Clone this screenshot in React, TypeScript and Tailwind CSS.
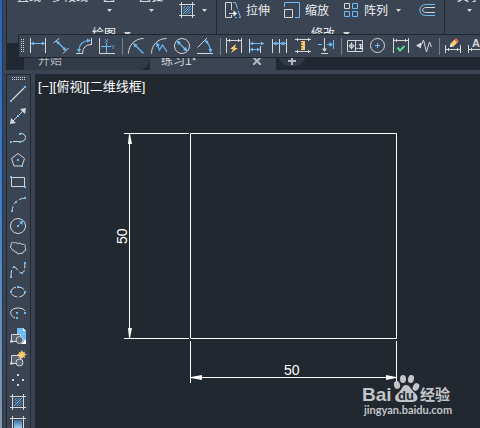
import type { ReactNode } from "react";

const G = "#d4d6d8";
const B = "#6cbcf8";
const Y = "#fbcb6b";

type Tool = { name: string; art: ReactNode };

function Icon({ children }: { children: ReactNode }) {
  return (
    <svg width="17" height="17" viewBox="0 0 17 17" fill="none" stroke={G} className="block shrink-0" aria-hidden="true">
      {children}
    </svg>
  );
}

function Dots({ points }: { points: number[][] }) {
  return (
    <>
      {points.map(([x, y]) => (
        <rect key={`${x}-${y}`} x={x - 1} y={y - 1} width="2" height="2" fill={B} stroke="none" />
      ))}
    </>
  );
}

function Caret({ className = "" }: { className?: string }) {
  return (
    <svg width="5" height="3" viewBox="0 0 5 3" className={`block shrink-0 ${className}`} aria-hidden="true">
      <path d="M0 0H5L2.5 3Z" fill="#d4d6d8" />
    </svg>
  );
}

const hatchArt = (
  <>
    <path d="M2.5 0V16M13.5 0V16M0 2.5H16M0 13.5H16" />
    <path stroke={B} d="M4 6.5L6.5 4M4 9.5L9.5 4M4 12L12 4M6.5 12L12 6.5M9.5 12L12 9.5" />
  </>
);

const dimensionGroups: Tool[][] = [
  [
    {
      name: "线性",
      art: (
        <>
          <path d="M.5 0V15M15.5 0V15" />
          <path stroke={B} d="M1 5.5H15" />
          <path fill={B} stroke="none" d="M1 5.5L4 3.5V7.5ZM15 5.5L12 3.5V7.5Z" />
        </>
      ),
    },
    {
      name: "对齐",
      art: (
        <>
          <path d="M.5 5L6.5 0M10 15.5L15.5 10" />
          <path stroke={B} strokeWidth="1.2" d="M3.5 3L13 12.5" />
          <path fill={B} stroke="none" d="M3 2.5L7 4L4.5 6.5ZM13.5 13L9.5 11.5L12 9Z" />
        </>
      ),
    },
    {
      name: "弧长",
      art: (
        <>
          <path d="M0 15.5H7M15.5 0V7M6.5 15Q7 7 15 6.5" />
          <path stroke={B} strokeWidth="1.2" d="M3 13Q3 3 13 2.5" />
          <path fill={B} stroke="none" d="M3 15L1 11H5ZM15 2.5L11 .5V4.5Z" />
        </>
      ),
    },
    {
      name: "坐标",
      art: (
        <>
          <path d="M.5 0V15.5H16" />
          <path stroke={B} d="M7.5 5V15M2 8.5H12" />
          <text x="5.5" y="4.5" fontSize="6" fill={B} stroke="none" fontFamily="Liberation Sans, sans-serif">X</text>
          <text x="12" y="11" fontSize="6" fill={B} stroke="none" fontFamily="Liberation Sans, sans-serif">Y</text>
        </>
      ),
    },
  ],
  [
    {
      name: "半径",
      art: (
        <>
          <path d="M.5 15.5C.5 7 7 .5 15.5 .5" />
          <path stroke={B} strokeWidth="1.2" d="M7 7L15.5 15.5" />
          <path fill={B} stroke="none" d="M5 5L9.5 6.5L6.5 9.5Z" />
        </>
      ),
    },
    {
      name: "折弯",
      art: (
        <>
          <path d="M.5 15.5C.5 7 7 .5 15.5 .5" />
          <path stroke={B} strokeWidth="1.2" d="M6 6L8.5 12L11.5 7L16 14" />
          <path fill={B} stroke="none" d="M5 4L9 7L5.5 9Z" />
        </>
      ),
    },
    {
      name: "直径",
      art: (
        <>
          <circle cx="8" cy="8" r="7.5" />
          <path stroke={B} strokeWidth="1.2" d="M3 3L13 13" />
          <path fill={B} stroke="none" d="M2.5 2.5L7 4L4 7ZM13.5 13.5L9 12L12 9Z" />
        </>
      ),
    },
    {
      name: "角度",
      art: (
        <>
          <path d="M0 15.5H16M.5 9.5L10 0" />
          <path stroke={B} strokeWidth="1.2" d="M8.5 3Q13.5 7 13.5 14" />
          <path fill={B} stroke="none" d="M7.5 2L11.5 3L9.5 6ZM13.5 15L11.5 11H15.5Z" />
        </>
      ),
    },
  ],
  [
    {
      name: "快速标注",
      art: (
        <>
          <path d="M.5 0V15M15.5 0V15M1 2.5H15M3.5 1V4M12.5 1V4" />
          <path fill={Y} stroke="none" d="M10 6L4 11H7L5 15L12 10H9Z" />
        </>
      ),
    },
    {
      name: "基线",
      art: (
        <>
          <path d="M.5 1V15M11.5 8V15" />
          <path stroke={B} d="M1 5.5H15M1 11.5H11" />
          <path fill={B} stroke="none" d="M1 5.5L4 3.5V7.5ZM1 11.5L4 9.5V13.5ZM15 5.5L12 3.5V7.5ZM11 11.5L8 9.5V13.5Z" />
        </>
      ),
    },
    {
      name: "连续",
      art: (
        <>
          <path d="M.5 1V15M7.5 1V15M14.5 1V15" />
          <path stroke={B} d="M1 5.5H14" />
          <path fill={B} stroke="none" d="M1 5.5L4 3.5V7.5ZM7 5.5L4.5 3.5V7.5ZM8 5.5L10.5 3.5V7.5ZM14 5.5L11 3.5V7.5Z" />
        </>
      ),
    },
    {
      name: "等距标注",
      art: (
        <>
          <path d="M0 1.5H16M0 13.5H16M2.5 0V3M13.5 0V3M2.5 12V15M13.5 12V15" />
          <path fill={Y} stroke="none" d="M6 3H10V12H6V10.5H7.5V9.5H6V8H7.5V7H6V5.5H7.5V4.5H6Z" />
        </>
      ),
    },
    {
      name: "折断标注",
      art: (
        <>
          <path d="M6.5 0V13M3 15.5H10" />
          <path fill={G} stroke="none" d="M6.5 14L4 10.5H9Z" />
          <path stroke={B} d="M0 6.5H4M9 6.5H14M15.5 2V11" />
          <path fill={B} stroke="none" d="M15 6.5L11.5 4V9Z" />
        </>
      ),
    },
  ],
  [
    {
      name: "公差",
      art: (
        <>
          <path d="M.5 2.5H15.5V13.5H.5ZM8.5 2.5V13.5" />
          <circle cx="4.5" cy="8" r="2" />
          <path d="M4.5 4.5V11.5M1.5 8H7.5" />
          <text x="9" y="11" fontSize="8" fontWeight="bold" fill="#fff" stroke="none" fontFamily="Liberation Sans, sans-serif">.1</text>
        </>
      ),
    },
    {
      name: "圆心标记",
      art: (
        <>
          <circle cx="7.5" cy="7.5" r="7" />
          <path stroke={B} d="M7.5 5V10M5 7.5H10" />
        </>
      ),
    },
    {
      name: "检验",
      art: (
        <>
          <path d="M.5 0V15M15.5 0V15M1 2.5H15M3.5 1V4M12.5 1V4" />
          <path stroke="#58d68d" strokeWidth="2" d="M4.5 9.5L7 12.5L11.5 8" />
        </>
      ),
    },
    {
      name: "折弯线性",
      art: (
        <>
          <path d="M3 7.5H5L7.5 2L10.5 14L13.5 4L15.5 9" />
          <path fill={G} stroke="none" d="M0 7.5L5 4.5V10.5Z" />
        </>
      ),
    },
  ],
  [
    {
      name: "编辑标注",
      art: (
        <>
          <path d="M.5 7V15M15.5 7V15M1 11.5H15M3.5 10V13M12.5 10V13" />
          <path stroke={Y} strokeWidth="4" d="M7 7L11 3" />
          <path stroke="#fa5f5f" strokeWidth="4" d="M11 3L12.5 1.5" />
          <path fill="#fff" stroke="none" d="M5 9L5.5 5.5L8.5 8.5Z" />
        </>
      ),
    },
    {
      name: "编辑标注文字",
      art: (
        <>
          <path d="M.5 7V15M15.5 7V15M1 11.5H15M3.5 10V13" />
          <text x="4" y="9" fontSize="11" fontWeight="bold" fill={G} stroke="none" fontFamily="Liberation Sans, sans-serif">A</text>
        </>
      ),
    },
  ],
];

const drawTools: Tool[] = [
  { name: "直线", art: <><path d="M2 14L14 2" strokeWidth="1.2" /><Dots points={[[1, 15], [15, 1]]} /></> },
  {
    name: "构造线",
    art: (
      <>
        <path d="M2 14L14 2" />
        <path fill={G} stroke="none" d="M0 16L1 10L6 15ZM16 0L10 1L15 6Z" />
        <Dots points={[[8, 8]]} />
      </>
    ),
  },
  { name: "多段线", art: <><path d="M3 11.5H9M11 3.5C17 3.5 17 11.5 11 11.5" /><Dots points={[[1, 12], [10, 12], [10, 4]]} /></> },
  { name: "多边形", art: <><path d="M8 1.5L14.5 6.5L12 14H4L1.5 6.5Z" /><Dots points={[[8, 8], [12, 14]]} /></> },
  { name: "矩形", art: <><path d="M1.5 3.5H14.5V12.5H1.5Z" /><Dots points={[[1, 3], [15, 13]]} /></> },
  { name: "圆弧", art: <><path d="M2 15C3 7 7 3 15 2" strokeDasharray="5 2" /><Dots points={[[2, 15], [6, 6], [15, 2]]} /></> },
  {
    name: "圆",
    art: (
      <>
        <circle cx="8" cy="8" r="7.5" />
        <path stroke={B} d="M9.5 6.5L12 4" />
        <path fill={B} stroke="none" d="M13 3L12.5 7L9 3.5Z" />
        <Dots points={[[8, 8]]} />
      </>
    ),
  },
  {
    name: "修订云线",
    art: <path d="M2 9C0 8 0 5 1.500 5C0 2.500 3 1.500 4.500 3C5.500 2 7.500 2.500 7.500 4C9 2.500 11.500 3 11.500 4.500C14 3.500 16.500 5.500 15 7.500C16.500 9 15.500 11.500 13.500 11.500C13.500 13.500 11 14 10 13C8.500 14.500 6.500 14 6.500 12C4.500 12.500 3.500 11 4 10C3 10.500 2 10 2 9Z" />,
  },
  { name: "样条曲线", art: <><path d="M1 15C1 10 2 5 4 5C7 5 9 12 12 11C15 10 14.5 6 15 1" strokeDasharray="7 2" /><Dots points={[[1, 15], [4, 5], [12, 11], [15, 1]]} /></> },
  { name: "椭圆", art: <><ellipse cx="8" cy="8" rx="7" ry="5" strokeDasharray="7 2" strokeDashoffset="-1" /><Dots points={[[1, 8], [8, 3], [15, 8]]} /></> },
  { name: "椭圆弧", art: <><path d="M15 5C13 1 3 1 1 5C0 8 2 11 5 12" /><Dots points={[[7, 7], [15, 7], [7, 12]]} /></> },
  {
    name: "插入块",
    art: (
      <>
        <path fill={B} stroke="none" d="M7 0H13L16 3V13H7Z" />
        <path fill="#fff" stroke="none" d="M13 0V3H16ZM11 16H16V11Z" />
        <path fill="#59616e" d="M1.5 6.5H10.5V13.5H1.5Z" />
        <circle cx="9.5" cy="12" r="3.5" fill="#59616e" />
        <path d="M0 13.5H3" strokeWidth="2" />
      </>
    ),
  },
  {
    name: "创建块",
    art: (
      <>
        <path fill="#59616e" d="M1.5 5.5H10.5V13.5H1.5Z" />
        <circle cx="9.5" cy="12.5" r="3.5" fill="#59616e" />
        <path d="M0 13.5H3" strokeWidth="2" />
        <path fill={Y} stroke="none" d="M12 0L13 2.5L15 1.5L14.5 3.5L17 4.5L14.5 5.5L15 8L13 7L12 9L10.5 7L8.5 8L9 5.5L7 4.5L9.5 3.5L8.5 1.5L10.5 2.5Z" />
      </>
    ),
  },
  { name: "点", art: <path fill={G} stroke="none" d="M7 2H9V4H7ZM2 7H4V9H2ZM12 7H14V9H12ZM7 12H9V14H7Z" /> },
  { name: "图案填充", art: hatchArt },
  {
    name: "渐变色",
    art: (
      <>
        <defs>
          <linearGradient id="fade" x2="0" y2="1">
            <stop stopColor="#3d6c9a" />
            <stop offset="1" stopColor="#a8dcff" />
          </linearGradient>
        </defs>
        <rect x="4" y="4" width="8" height="9" fill="url(#fade)" stroke="none" />
        <path d="M2.5 0V16M13.5 0V16M0 2.5H16M0 13.5H16" />
      </>
    ),
  },
];

function RibbonButton({ label, art, caret }: { label: string; art: ReactNode; caret?: boolean }) {
  return (
    <button type="button" className="flex items-center gap-1 whitespace-nowrap leading-4">
      <Icon>{art}</Icon>
      {label}
      {caret && <Caret className="ml-1" />}
    </button>
  );
}

function ClippedButton({ label, caret }: { label: string; caret?: boolean }) {
  return (
    <button type="button" className="-mt-[11px] flex flex-col items-center gap-1 self-start whitespace-nowrap leading-4">
      {label}
      {caret && <Caret />}
    </button>
  );
}

function PanelTitle({ label }: { label: string }) {
  return (
    <button type="button" className="mx-auto mt-[5px] flex items-center gap-2 leading-4">
      {label}
      <svg width="7" height="4" viewBox="0 0 7 4" aria-hidden="true">
        <path d="M0 0H7L3.5 4Z" fill="#d4d6d8" />
      </svg>
    </button>
  );
}

function Ribbon() {
  return (
    <header className="flex h-[43px] overflow-hidden border-l border-[#222831] text-[#eceef0]">
      <section className="w-[210px] shrink-0 border-r border-[#222831]">
        <div className="flex h-[21px] items-center pl-[10px]">
          <ClippedButton label="直线" />
          <div className="w-[11px]" />
          <ClippedButton label="多段线" />
          <div className="w-[15px]" />
          <ClippedButton label="圆" caret />
          <div className="w-6" />
          <ClippedButton label="圆弧" caret />
          <button type="button" aria-label="图案填充" className="ml-4 flex items-center gap-[6px]">
            <Icon>{hatchArt}</Icon>
            <Caret />
          </button>
        </div>
        <PanelTitle label="绘图" />
      </section>
      <section className="w-[228px] shrink-0 border-r border-[#222831]">
        <div className="flex h-[21px] items-center gap-[14px] pl-2">
          <RibbonButton
            label="拉伸"
            art={
              <>
                <path d="M6.5 8V.5H.5V15.5H6.5V13M4 11.5H10" />
                <path fill="#fff" stroke="none" d="M12 11.5L8.5 8.5V14.5Z" />
                <path stroke={B} d="M8 .5H10.5L15.5 15.5H10" strokeDasharray="9 2" />
              </>
            }
          />
          <RibbonButton
            label="缩放"
            art={
              <>
                <path stroke={B} d="M.5 5V.5H15.5V15.5H11" />
                <path d="M.5 7.5H8.5V15.5H.5Z" />
              </>
            }
          />
          <RibbonButton
            label="阵列"
            caret
            art={
              <>
                <path d="M1.5 1.5H6.5V6.5H1.5Z" />
                <path stroke={B} d="M9.5 1.5H14.5V6.5H9.5ZM1.5 9.5H6.5V14.5H1.5ZM9.5 9.5H14.5V14.5H9.5Z" />
              </>
            }
          />
          <button type="button" aria-label="偏移" className="ml-1">
            <Icon>
              <path stroke={B} d="M16 2.5H6.5C-1 2.5 -1 13.5 6.5 13.5H16" />
              <path d="M16 5.5H7C2.5 5.5 2.5 10.5 7 10.5H16" />
            </Icon>
          </button>
        </div>
        <PanelTitle label="修改" />
      </section>
      <section className="flex min-w-0 flex-1 pl-3">
        <ClippedButton label="文字" caret />
      </section>
    </header>
  );
}

function DimensionToolbar() {
  return (
    <div
      role="toolbar"
      aria-label="标注"
      className="absolute left-[18px] right-0 top-[34px] flex h-6 items-center overflow-hidden border-y border-l border-[#222831] bg-[#3b4453]"
    >
      <svg width="8" height="14" className="shrink-0" aria-hidden="true">
        <path d="M2.5 0V14M4.5 0V14" stroke={G} strokeDasharray="1 1" />
      </svg>
      {dimensionGroups.map((group, i) => (
        <div key={i} className="flex shrink-0">
          {i > 0 && (
            <div className="flex w-[6px] justify-center">
              <div className="w-px bg-[#79808a]" />
            </div>
          )}
          {group.map((tool) => (
            <button key={tool.name} type="button" aria-label={tool.name} className="flex h-[17px] w-[23px] justify-center">
              <Icon>{tool.art}</Icon>
            </button>
          ))}
        </div>
      ))}
    </div>
  );
}

function DocumentTabs() {
  return (
    <nav className="flex h-[27px] bg-[#222831] pl-[18px] text-[#b4b8be]">
      <button type="button" className="flex w-[126px] items-center rounded-br-xl bg-[#323a47] pl-[14px] pt-2">
        开始
      </button>
      <div className="flex w-[126px] items-center justify-between rounded-t-lg bg-[#3b4453] pl-[11px] pr-[15px] pt-2">
        <button type="button" className="text-[#d4d6d8]">练习1*</button>
        <button type="button" aria-label="关闭">
          <svg width="8" height="8" viewBox="0 0 8 8" aria-hidden="true">
            <path d="M0 0L8 8M8 0L0 8" stroke="#b4b8be" strokeWidth="2" />
          </svg>
        </button>
      </div>
      <button type="button" aria-label="新建" className="ml-[2px] flex h-[23px] w-7 items-center justify-center rounded-b-xl bg-[#323a47] pt-3">
        <svg width="8" height="8" viewBox="0 0 8 8" aria-hidden="true">
          <path d="M4 0V8M0 4H8" stroke="#b4b8be" strokeWidth="2" />
        </svg>
      </button>
    </nav>
  );
}

function DrawPalette() {
  return (
    <aside role="toolbar" aria-label="绘图" className="flex w-[25px] shrink-0 flex-col items-center overflow-hidden border-x border-t border-[#222831]">
      <svg width="14" height="8" className="shrink-0" aria-hidden="true">
        <path d="M0 2.5H14M0 4.5H14" stroke={G} strokeDasharray="1 1" />
      </svg>
      {drawTools.map((tool) => (
        <button key={tool.name} type="button" aria-label={tool.name} className="flex h-[22px] w-[23px] shrink-0 items-center justify-center">
          <Icon>{tool.art}</Icon>
        </button>
      ))}
    </aside>
  );
}

function Drawing() {
  return (
    <svg width="445" height="354" viewBox="35 74 445 354" className="absolute left-0 top-0" aria-label="图形">
      <g fill="none" stroke="#fff">
        <path d="M190.5 133.5H396.5V338.5H190.5Z" />
        <path d="M124 133.5H189M124 338.5H189M129.5 134V338" />
        <path d="M190.5 341V383M396.5 341V383M191 377.5H396" />
      </g>
      <g fill="#fff">
        <path d="M129 134H130L132 144H128ZM129 338H130L132 328H128Z" />
        <path d="M191 377V378L202 380V375ZM396 377V378L386 380V375Z" />
      </g>
      <g fill="#fff" fontSize="14" fontFamily="Liberation Sans, sans-serif">
        <text x="284" y="375">50</text>
        <text transform="translate(127 244) rotate(-90)">50</text>
      </g>
      <g fill="#c3c5c8">
        <text x="362" y="401" fontSize="19" fontWeight="bold" fontFamily="Liberation Sans, sans-serif">Bai</text>
        <ellipse cx="397" cy="385" rx="3" ry="4" transform="rotate(-15 397 385)" />
        <ellipse cx="403" cy="379" rx="3" ry="4" />
        <ellipse cx="411" cy="379" rx="3" ry="4" transform="rotate(12 411 379)" />
        <ellipse cx="416" cy="387" rx="3" ry="4" transform="rotate(30 416 387)" />
        <path d="M406 385C410 385 411 390 415 393C420 398 417 402 412 402H400C395 402 393 397 398 393C402 390 402 385 406 385Z" />
        <text x="398" y="400" fontSize="13" fontWeight="bold" fill="#222831" fontFamily="Liberation Sans, sans-serif">du</text>
        <text x="420" y="400" fontSize="15" fontWeight="bold" fontFamily="Noto Sans CJK SC, sans-serif">经验</text>
        <text x="364" y="414" fontSize="11" fontWeight="bold" fontFamily="Lato, sans-serif">jingyan.baidu.com</text>
      </g>
    </svg>
  );
}

export default function App() {
  return (
    <div className="flex h-screen overflow-hidden bg-[#3b4453] font-['Liberation_Sans','Noto_Sans_CJK_SC',sans-serif] text-xs">
      <div className="w-[2px] shrink-0 bg-linear-to-b from-[#2465b8] via-[#3f82d0] to-[#8798a8]" />
      <div className="w-px shrink-0 bg-[#26384f]" />
      <div className="relative -ml-[3px] flex min-w-0 flex-1 flex-col pl-[6px]">
        <Ribbon />
        <DocumentTabs />
        <div className="flex min-h-0 flex-1 pt-1">
          <DrawPalette />
          <main className="relative ml-1 min-w-0 flex-1 overflow-hidden bg-[#212830]">
            <Drawing />
            <div className="relative flex pl-[3px] pt-[5px] text-[13px] leading-4 text-white">
              <button type="button">[−]</button>
              <button type="button">[俯视]</button>
              <button type="button">[二维线框]</button>
            </div>
          </main>
        </div>
        <DimensionToolbar />
      </div>
    </div>
  );
}
